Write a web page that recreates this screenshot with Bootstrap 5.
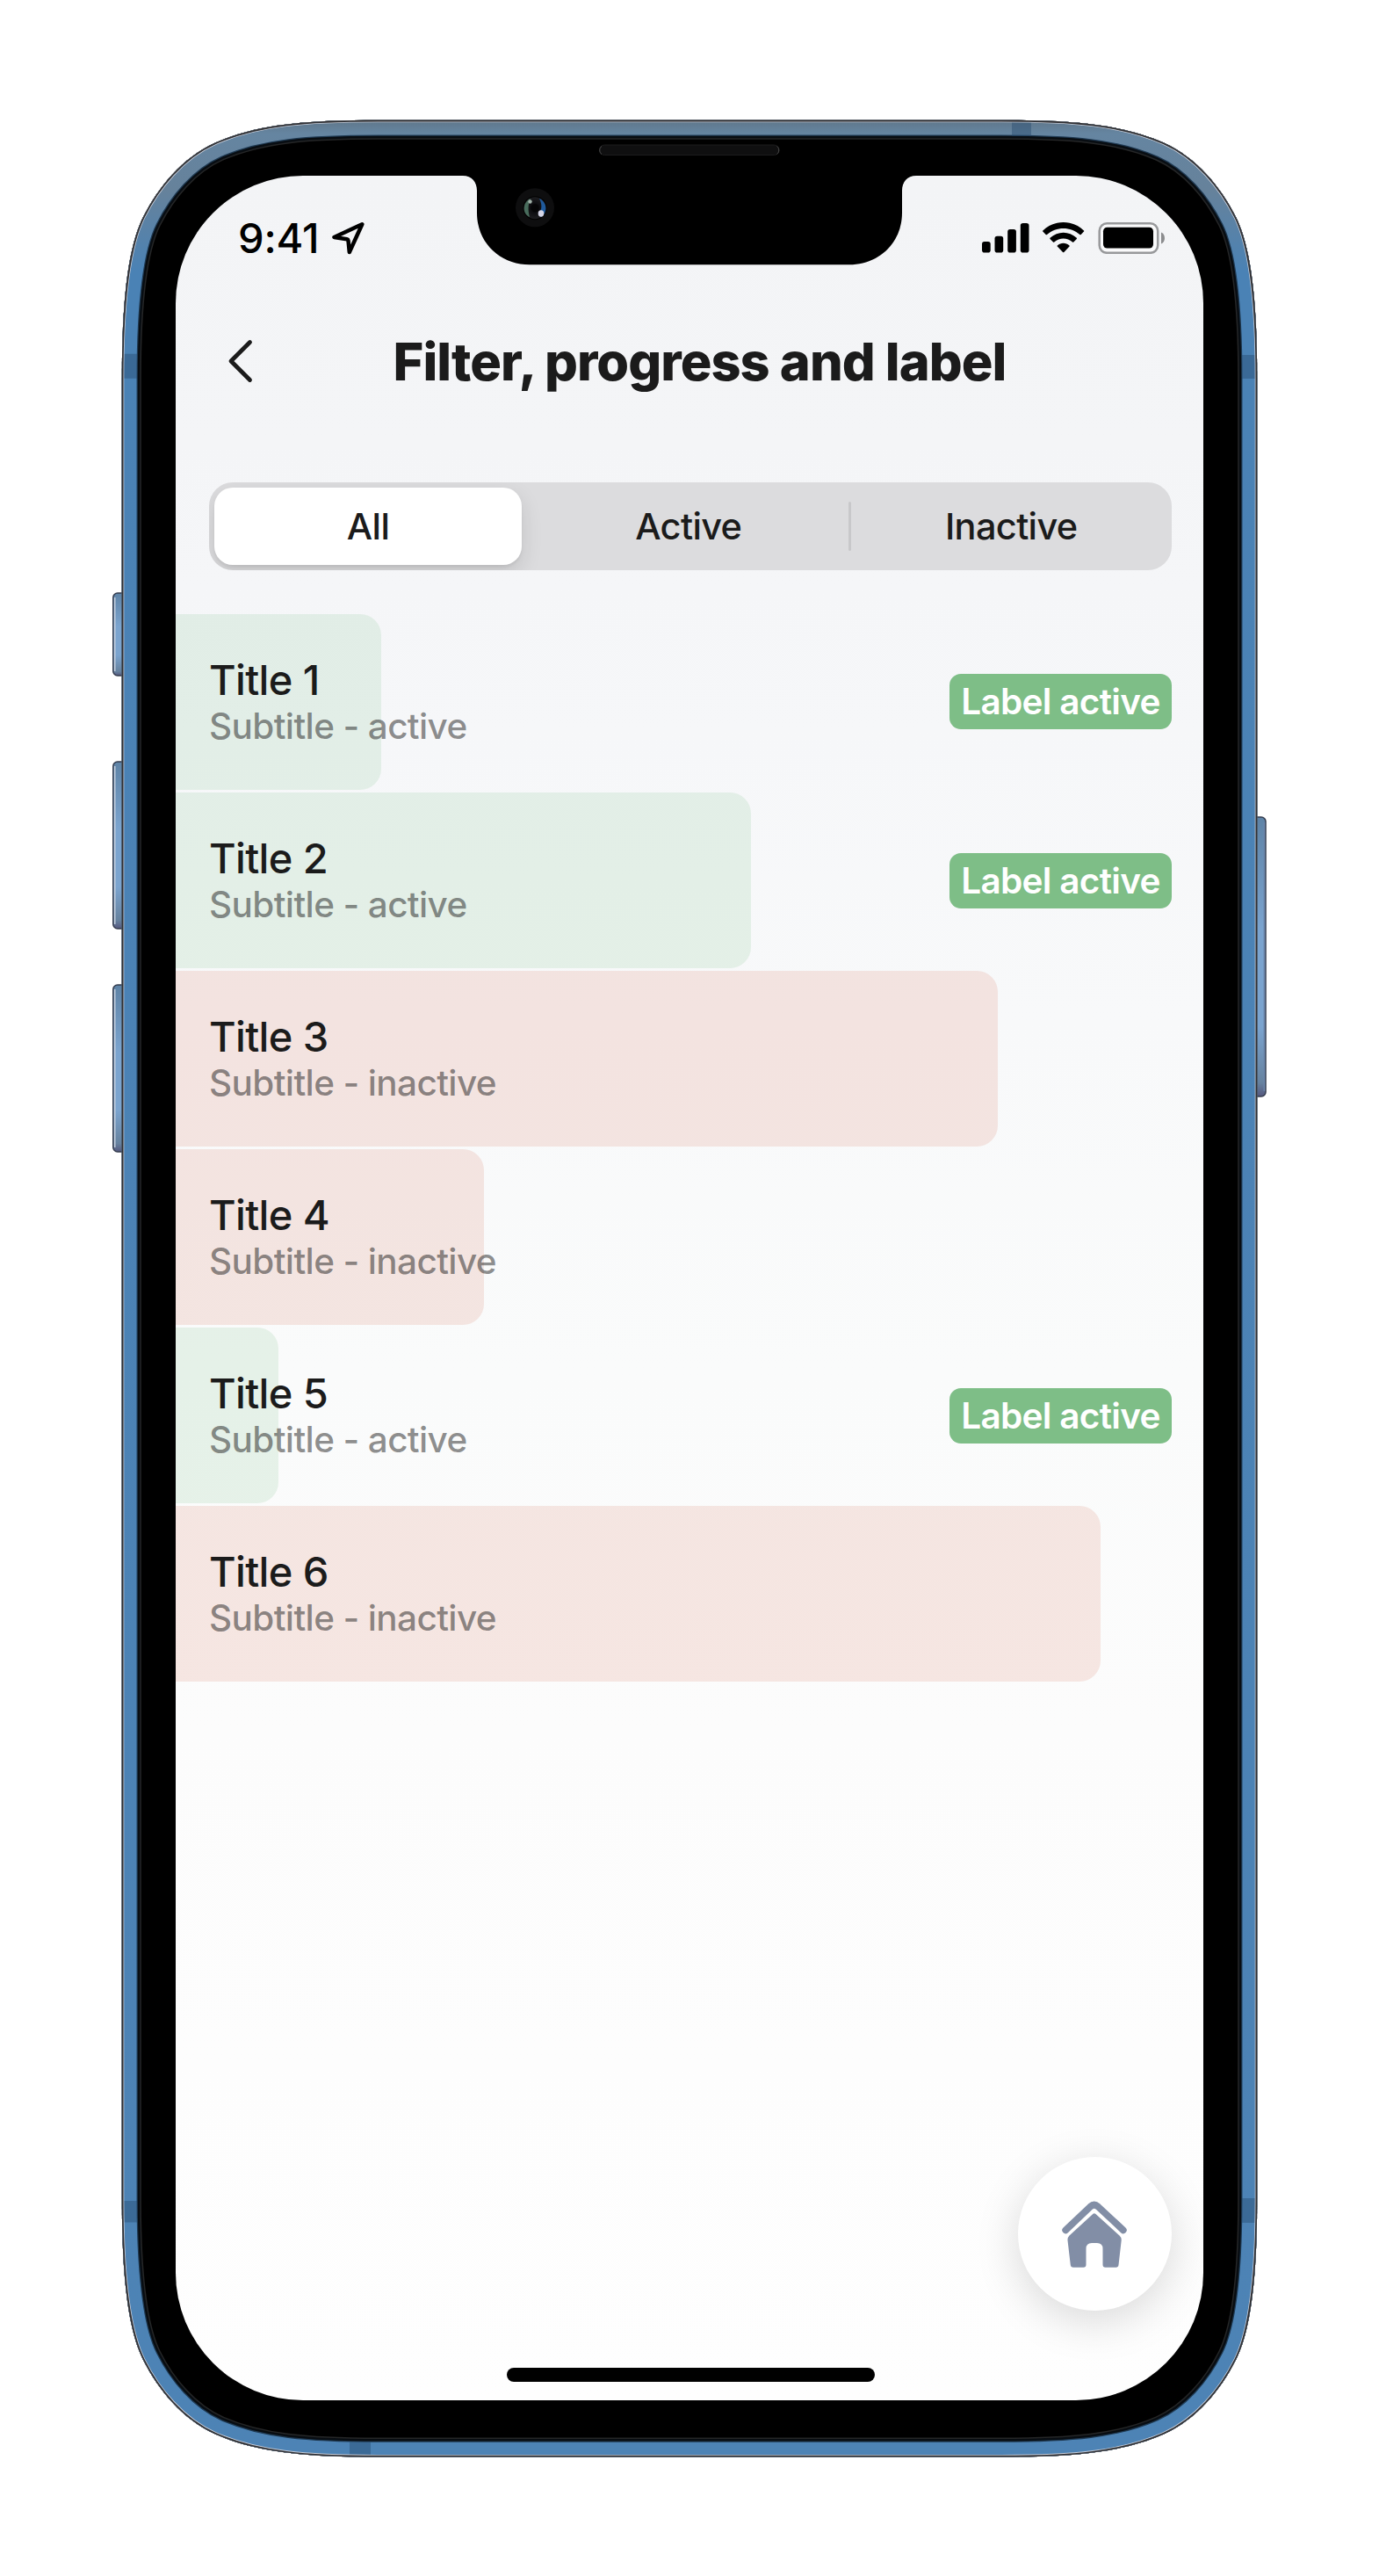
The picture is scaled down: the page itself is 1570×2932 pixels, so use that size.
<!DOCTYPE html>
<html lang="en">
<head>
<meta charset="utf-8">
<meta name="viewport" content="width=device-width, initial-scale=1">
<title>Filter, progress and label</title>
<link rel="stylesheet" href="https://cdn.jsdelivr.net/npm/bootstrap@5.3.0/dist/css/bootstrap.min.css">
<style>
body{background:#fff;font-family:Inter,"Liberation Sans",sans-serif;color:#1b1b1b;overflow-x:hidden}
.stage{height:2932px;padding-top:136px}
.phone{width:1294px;height:2661px;padding:64px 62px 0}
.chassis{left:-12px;top:0}
.display{width:1170px;height:2532px;border-radius:145px;background:linear-gradient(#f3f4f6 0,#f4f5f7 12%,#f6f7f9 25%,#f8f9fa 38%,#fafbfb 54%,#fcfcfc 70%,#fefefe 100%);overflow:hidden}
.notch{left:327px;top:0}
.status{height:142px;padding:0 44px 0 71px}
.clock{font-size:47px;font-weight:550;line-height:1;color:#000;letter-spacing:-.2px;padding-bottom:1px}
.locate{margin-left:14px}
.head{height:138px;padding:0 64px 0 59px}
.back-btn{line-height:0;width:28px}
.page-title{font-size:59.500px;font-weight:800;line-height:72px;letter-spacing:-.95px}
.segments{height:100px;margin:69px 36px 0 38px;border-radius:27px;background:#dcdcde;padding:6px 0 6px 6px;overflow:hidden}
.segments .nav-link{height:88px;font-size:41.500px;font-weight:500;letter-spacing:-.65px;color:#1b1b1b;padding:0;border-radius:21px;line-height:88px;flex:1 1 0;text-align:center}
.segments .nav-link.active{flex:0 0 350px;margin-right:7px;background:#fff;color:#1b1b1b;box-shadow:0 9px 24px rgba(0,0,0,.12),0 3px 3px rgba(0,0,0,.05)}
.split{width:3px;height:56px;margin-left:-1px;border-radius:2px;background:#c8c8ca}
.rows{margin-top:50px;gap:3.200px}
.entry{height:199.900px;padding:0 36px 0 38px}
.fill{left:0;top:0;bottom:0;border-radius:0 24px 24px 0}
.on .fill{background:rgba(126,190,135,.16)}
.off .fill{background:rgba(208,78,50,.125)}
.entry-title{font-size:47px;font-weight:500;line-height:52px;letter-spacing:-.65px}
.entry-sub{font-size:40.500px;font-weight:500;line-height:54px;letter-spacing:-.63px;color:rgba(20,20,20,.49)}
.state{font-size:40.500px;font-weight:600;letter-spacing:-.7px;line-height:63px;height:63px;width:253px;padding:0;border-radius:13px;background:#7ebe87}
.home-btn{right:36.500px;bottom:102px;width:175px;height:175px;background:#fff;border:0;box-shadow:0 12px 50px rgba(0,0,0,.15)}
.home-btn svg{margin-right:1px}
.indicator{left:377px;bottom:21px;width:418.500px;height:16px;background:#000}
</style>
</head>
<body>
<div class="stage d-flex justify-content-center align-items-start">
<div class="phone position-relative flex-shrink-0">
<svg class="chassis position-absolute" width="1318" height="2662" viewBox="126 136 1318 2662">
<defs>
<linearGradient id="steel" gradientUnits="userSpaceOnUse" x1="0" y1="136" x2="0" y2="2797"><stop offset="0" stop-color="#5f7689"/><stop offset=".006" stop-color="#6585a1"/><stop offset=".03" stop-color="#66829b"/><stop offset=".065" stop-color="#4a82b5"/><stop offset="1" stop-color="#4d83b5"/></linearGradient>
<linearGradient id="key" x1="0" y1="0" x2="0" y2="1"><stop offset="0" stop-color="#5e83a6"/><stop offset=".4" stop-color="#7ba4cf"/><stop offset=".75" stop-color="#7ba4cf"/><stop offset=".95" stop-color="#66829f"/><stop offset="1" stop-color="#55587f"/></linearGradient>
<path id="edge" d="M430 136.8H1140C1220 136.8 1276 141 1325 162.5C1362 179 1390 213 1407 247C1424 281 1431.2 340 1431.2 430V2503C1431.2 2593 1424 2652 1407 2686C1390 2720 1362 2754 1325 2770.5C1276 2792 1220 2796.5 1140 2796.5H430C350 2796.5 294 2792 245 2770.5C208 2754 180 2720 163 2686C146 2652 138.8 2593 138.8 2503V430C138.8 340 146 281 163 247C180 213 208 179 245 162.5C294 141 350 136.8 430 136.8Z"/>
<clipPath id="inside"><use href="#edge"/></clipPath>
</defs>
<g fill="url(#key)" stroke="#343c4e" stroke-width="1.5">
<rect x="128.8" y="675" width="16" height="94" rx="5"/><rect x="128.8" y="867" width="16" height="190" rx="5"/><rect x="128.8" y="1121" width="16" height="190" rx="5"/><rect x="1425" y="930" width="16" height="318" rx="5"/>
</g>
<path d="M130.7 680v84M130.7 872v180M130.7 1126v180" stroke="#c3cfdf" stroke-width="1.6"/>
<path d="M1439.4 936v306" stroke="#6c86ab" stroke-width="1.6"/>
<use href="#edge" fill="#000"/>
<g clip-path="url(#inside)" fill="none">
<use href="#edge" stroke="#252627" stroke-width="44"/>
<use href="#edge" stroke="#080d12" stroke-width="41"/>
<use href="#edge" stroke="#1f3a53" stroke-width="36"/>
<use href="#edge" stroke="url(#steel)" stroke-width="33.500"/>
<path d="M139 402.7h17v28h-17zM1414 404h17v27h-17zM1152 138h22v17h-22zM139 2505h17v24.500h-17zM398 2779.500h24v17h-24zM1414 2502h17v28h-17z" fill="#24486b" fill-opacity=".42"/>
<use href="#edge" stroke="#c6ccd8" stroke-width="5"/>
<use href="#edge" stroke="#303033" stroke-width="3.4"/>
</g>
<rect x="682.500" y="165" width="204.500" height="11.500" rx="5.700" fill="#0f0f10" stroke="#1c1c1d"/>
<path d="M685 166.500c-3 2-3 7 0 9M884.500 166.500c3 2 3 7 0 9" fill="none" stroke="#4a4a4b" stroke-width="1"/>
</svg>
<main class="display position-relative d-flex flex-column">
<svg class="notch position-absolute" width="516" height="102" viewBox="0 0 516 102">
<defs><radialGradient id="lens"><stop offset="0" stop-color="#000"/><stop offset=".4" stop-color="#0d0d10"/><stop offset="1" stop-color="#1d1d20"/></radialGradient></defs>
<path d="M0 0C10 0 16 7 16 17V42C16 78 44 101.300 76 101.300H440C472 101.300 500 78 500 42V17C500 7 506 0 516 0Z"/>
<circle cx="82" cy="36.300" r="22" fill="#0e0e0f"/><circle cx="82" cy="36.700" r="13.500" fill="#000"/><circle cx="82" cy="36.700" r="12.500" fill="url(#lens)"/>
<path d="M77 26C68 30 67 43 76 47C74 40 74 32 77 26Z" fill="#486c5c"/><path d="M87 26C96 30 97 42 89 47C86 45 87 42 89 38C90 34 89 30 87 26Z" fill="#1f5a9c"/>
<circle cx="76.500" cy="29.500" r="2.200" fill="#a0b0a8"/><ellipse cx="89" cy="43" rx="3.300" ry="3.700" fill="#d4d5e6"/><circle cx="82" cy="36.700" r="4.500" fill="#050506"/>
</svg>
<div class="status d-flex justify-content-between align-items-center">
<div class="d-flex align-items-center"><span class="clock">9:41</span>
<svg class="locate" width="38" height="38" viewBox="379 252.500 38 38" fill="none" stroke="#000" stroke-width="4.500" stroke-linejoin="round"><path d="M414.300 255.700L382.500 270.500L397 272.800Q398.300 273 398.500 274.300L399.800 287.500Z"/></svg></div>
<svg width="208" height="36" viewBox="1118 253 208 36">
<rect x="1118" y="275" width="9.700" height="12.600" rx="2.800"/><rect x="1132.500" y="268.700" width="9.700" height="18.900" rx="2.800"/><rect x="1147.200" y="261" width="9.700" height="26.600" rx="2.800"/><rect x="1161.800" y="254" width="9.700" height="33.600" rx="2.800"/>
<path d="M1187.300 262.400C1200 250 1221.400 250 1234 262.400Q1234.500 263 1234 263.600L1230.700 267Q1230 267.500 1229.400 267C1219 257.600 1202.300 257.600 1192 267Q1191.300 267.500 1190.700 267L1187.300 263.600Q1186.800 263 1187.300 262.400Z"/>
<path d="M1195.500 270.800C1204.500 262.600 1217 262.600 1225.800 270.800Q1226.300 271.400 1225.800 272L1222.300 275.400Q1221.700 275.900 1221 275.400C1214.800 270.200 1206.500 270.200 1200.300 275.400Q1199.600 275.900 1199 275.400L1195.500 272Q1195 271.400 1195.500 270.800Z"/>
<path d="M1203.800 279.400C1207.800 276 1213.500 276 1217.500 279.400Q1218.100 280 1217.500 280.600L1211.400 286.900Q1210.700 287.600 1210 286.900L1203.800 280.600Q1203.200 280 1203.800 279.400Z"/>
<rect x="1251.700" y="254.300" width="66.500" height="33.500" rx="8.500" fill="#fafafb" stroke="#98999b" stroke-width="2.500"/><rect x="1256" y="258.700" width="57" height="23.800" rx="4.500"/><path d="M1322 264.500C1327.300 266.500 1327.300 275.500 1322 277.500Z" fill="#8b8c8e"/>
</svg>
</div>
<header class="head d-flex align-items-center">
<a class="back-btn" href="#" aria-label="Back"><svg width="29" height="50" viewBox="0 0 29 50" fill="none" stroke="#1b1b1b" stroke-width="4.800" stroke-linecap="round" stroke-linejoin="round"><path d="M25.500 3.500L4 25L25.500 46.500"/></svg></a>
<h1 class="page-title flex-grow-1 text-center mb-0">Filter, progress and label</h1>
</header>
<nav class="segments nav nav-pills align-items-center flex-nowrap"><a class="nav-link active" href="#">All</a><a class="nav-link" href="#">Active</a><span class="split"></span><a class="nav-link" href="#">Inactive</a></nav>
<div class="rows d-flex flex-column">
<div class="entry on position-relative d-flex align-items-center justify-content-between"><div class="fill position-absolute" style="width:20%"></div><div class="position-relative pt-1"><div class="entry-title">Title 1</div><div class="entry-sub">Subtitle - active</div></div><span class="badge state">Label active</span></div>
<div class="entry on position-relative d-flex align-items-center justify-content-between"><div class="fill position-absolute" style="width:56%"></div><div class="position-relative pt-1"><div class="entry-title">Title 2</div><div class="entry-sub">Subtitle - active</div></div><span class="badge state">Label active</span></div>
<div class="entry off position-relative d-flex align-items-center"><div class="fill position-absolute" style="width:80%"></div><div class="position-relative pt-1"><div class="entry-title">Title 3</div><div class="entry-sub">Subtitle - inactive</div></div></div>
<div class="entry off position-relative d-flex align-items-center"><div class="fill position-absolute" style="width:30%"></div><div class="position-relative pt-1"><div class="entry-title">Title 4</div><div class="entry-sub">Subtitle - inactive</div></div></div>
<div class="entry on position-relative d-flex align-items-center justify-content-between"><div class="fill position-absolute" style="width:10%"></div><div class="position-relative pt-1"><div class="entry-title">Title 5</div><div class="entry-sub">Subtitle - active</div></div><span class="badge state">Label active</span></div>
<div class="entry off position-relative d-flex align-items-center"><div class="fill position-absolute" style="width:90%"></div><div class="position-relative pt-1"><div class="entry-title">Title 6</div><div class="entry-sub">Subtitle - inactive</div></div></div>
</div>
<button class="home-btn btn rounded-circle position-absolute d-flex align-items-center justify-content-center p-0" type="button" aria-label="Home">
<svg width="74" height="76" viewBox="0 0 74 76"><path d="M4.200 33.300L32.500 6.500Q36.700 2.800 41 6.500L69.800 33.300" fill="none" stroke="#828ea6" stroke-width="7.800" stroke-linecap="round" stroke-linejoin="round"/><path d="M35.500 14.800Q36.800 13.800 38.200 14.800L65.500 39.500Q68 41.800 67.700 45L64.500 73Q64.200 75.800 61.500 75.800H49.500Q46.500 75.800 46.500 72.800V54.500Q46.500 48 40 48H34Q27.500 48 27.500 54.500V72.800Q27.500 75.800 24.500 75.800H13Q10.100 75.800 9.800 73L6.500 45Q6.200 41.800 8.500 39.500Z" fill="#828ea6"/></svg>
</button>
<div class="indicator rounded-pill position-absolute"></div>
</main>
</div>
</div>
<script src="https://cdn.jsdelivr.net/npm/bootstrap@5.3.0/dist/js/bootstrap.bundle.min.js"></script>
</body>
</html>
